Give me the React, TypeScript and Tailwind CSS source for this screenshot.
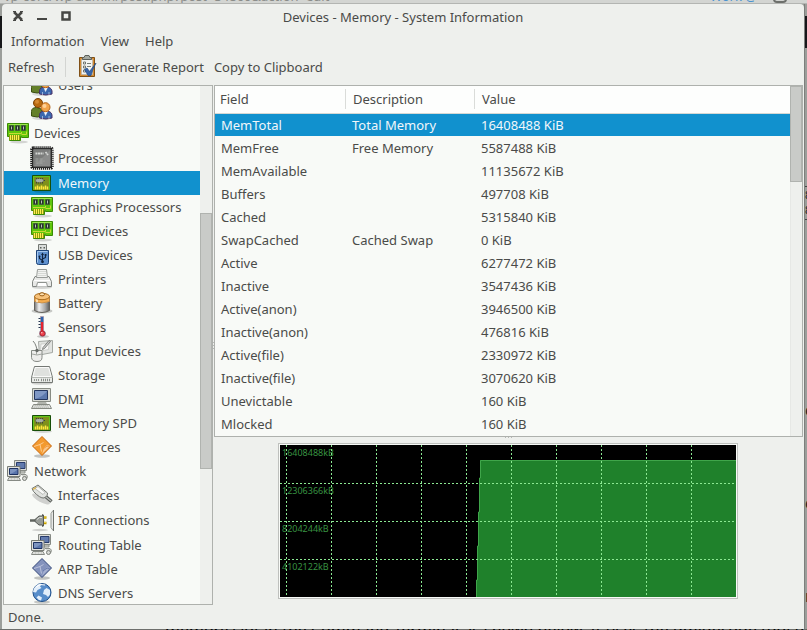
import { useState } from "react";
import type { ReactNode } from "react";
import clsx from "clsx";

function Icon({ children }: { children: ReactNode }) {
  return (
    <svg viewBox="0 0 24 24" className="size-6 shrink-0" aria-hidden="true">
      {children}
    </svg>
  );
}

function UsersIcon() {
  return (
    <Icon>
      <ellipse cx="12" cy="21" rx="10" ry="2" fill="#000" opacity=".12" />
      <path d="M1.500 19v-4.500q0-4 5-4t6 4V19q-5 2-11 0z" fill="#64802a" stroke="#3d5012" />
      <circle cx="8" cy="6" r="4.500" fill="#b8690f" stroke="#7c4308" />
      <circle cx="7" cy="4.800" r="2" fill="#d48a35" />
      <path d="M9.500 21v-3q0-4 6-4t6.500 4v3q-6 2-12.500 0z" fill="#3b68ae" stroke="#4a3268" />
      <path d="M14 14.500l1.500 4 2-4zM12.500 22v-3M19 22v-3" fill="#fff" stroke="#dbe6f5" strokeWidth=".6" />
      <circle cx="15.500" cy="10.200" r="4.500" fill="#f2a44b" stroke="#b5641a" />
      <circle cx="14.500" cy="9" r="2" fill="#ffd299" />
    </Icon>
  );
}

function CardIcon() {
  return (
    <Icon>
      <ellipse cx="13" cy="21" rx="9" ry="1.500" fill="#000" opacity=".15" />
      <path d="M1.500 2.500h21v14h-7v-1h-1v4h-11v-4h-2z" fill="#5fc70c" stroke="#3b8a04" />
      <path d="M2.500 3.500h19" stroke="#9be84f" />
      <path d="M3 14h11v5H3z" fill="#8f9c10" />
      <path d="M4.500 19v-5M6.500 19v-5M8.500 19v-5M10.500 19v-5M12.500 19v-5" stroke="#ffee4f" />
      <path d="M3 12.500h12.500v-1.500M15.500 13.500h5v-3" fill="none" stroke="#c9da35" />
      <path d="M3.500 4.500h4v5h-4zM9.500 4.500h4v5h-4zM15.500 4.500h4v5h-4z" fill="#26332a" stroke="#3f5a3a" strokeWidth=".8" />
      <path d="M5.500 5.500v3M11.500 5.500v3M17.500 5.500v3" stroke="#b9c4b8" />
    </Icon>
  );
}

function ProcessorIcon() {
  return (
    <Icon>
      <rect x="2" y="2" width="20" height="20" fill="#222" />
      <rect x="1.500" y="1.500" width="21" height="21" rx="2" fill="none" stroke="#222" strokeWidth="2.500" strokeDasharray="1.200 .8" />
      <rect x="3" y="3" width="18" height="18" rx="1" fill="#8b8c8b" stroke="#373837" />
      <path d="M3.500 20.500v-17h17z" fill="#7b7c7b" />
      <path d="M5.500 7.500h8M15.500 6l2.500 3" stroke="#d3d5d3" strokeWidth="1.800" strokeDasharray="2 .5" />
      <path d="M5.500 13h7M5.500 15h9M5.500 17h7" stroke="#aaadaa" strokeWidth=".8" strokeDasharray="3 1" />
    </Icon>
  );
}

function MemoryIcon() {
  return (
    <Icon>
      <ellipse cx="13" cy="20.500" rx="9" ry="1.500" fill="#000" opacity=".15" />
      <path d="M2.500 4.500h18v15h-18z" fill="#7f901c" stroke="#174f08" />
      <path d="M3.500 18.500v-13h16v13" fill="none" stroke="#61c51a" />
      <path d="M5.500 18.500v-3M7.500 18.500v-4M9.500 18.500v-3M11.500 18.500v-4M13.500 18.500v-3M15.500 18.500v-4M17.500 18.500v-3" stroke="#ffe73b" strokeWidth="1.500" />
      <path d="M5 9.500h10M6.500 7v5.500M8.500 7v5.500M10.500 7v5.500M12.500 7v5.500" stroke="#3e453b" strokeWidth="1.200" />
      <ellipse cx="9.500" cy="9.500" rx="4" ry="1.800" fill="#a7aea5" />
    </Icon>
  );
}

function UsbIcon() {
  return (
    <Icon>
      <path d="M8.500 1.500h8v7h-8z" fill="#d9dcda" stroke="#737773" />
      <path d="M10 4h1.500v1.500H10zM13.500 4H15v1.500h-1.500z" fill="#585d58" />
      <path d="M6.500 7.500h12v12q0 2-2 2h-8q-2 0-2-2z" fill="#5f91cf" stroke="#1e4579" />
      <path d="M7.500 19.500v-11h10" fill="none" stroke="#a4c6ed" />
      <path d="M12.500 19v-8M12.500 17.500l-3-2v-2M12.500 16l3-1.500V12" fill="none" stroke="#10233f" strokeWidth="1.100" />
      <path d="M11 12l1.500-2.500L14 12z" fill="#10233f" />
      <circle cx="12.500" cy="18.800" r="1.400" fill="#10233f" />
      <circle cx="9.500" cy="13.500" r="1" fill="#10233f" />
      <path d="M14.700 11h1.800v1.800h-1.800z" fill="#10233f" />
    </Icon>
  );
}

function PrinterIcon() {
  return (
    <Icon>
      <ellipse cx="12" cy="20.500" rx="10" ry="1.500" fill="#000" opacity=".15" />
      <path d="M5 9.500h14l2.500 5v5h-19v-5z" fill="#e8e9e7" stroke="#838783" />
      <path d="M7.500 2.500h9l1 8h-11z" fill="#f2f3f1" stroke="#989c98" />
      <path d="M8 4.500h8M8 6.500h8M7.500 8.500h9" stroke="#c8cbc7" strokeWidth=".7" />
      <path d="M4 13.500h16" stroke="#fff" />
      <path d="M6.500 19.500l1-4h9l1 4" fill="#fff" stroke="#8e928e" />
    </Icon>
  );
}

function BatteryIcon() {
  return (
    <Icon>
      <defs>
        <linearGradient id="cell">
          <stop offset="0" stopColor="#777" />
          <stop offset=".3" stopColor="#eee" />
          <stop offset=".7" stopColor="#aaa" />
          <stop offset="1" stopColor="#5c5c5c" />
        </linearGradient>
      </defs>
      <ellipse cx="12" cy="20" rx="10.500" ry="2.500" fill="#000" opacity=".2" />
      <path d="M4.500 5.500v14q7.500 4 15 0v-14z" fill="url(#cell)" stroke="#65625c" />
      <path d="M4.500 5.500v5q7.500 3 15 0v-5z" fill="#f5ad50" stroke="#b98343" strokeWidth=".7" />
      <path d="M7 7v4" stroke="#ffe0ae" strokeWidth="2" />
      <ellipse cx="12" cy="5.500" rx="7.500" ry="3.200" fill="#f7c27a" stroke="#a86a1b" />
      <ellipse cx="12" cy="3.300" rx="2.500" ry="1.600" fill="#ffe1b0" stroke="#985b12" />
    </Icon>
  );
}

function SensorIcon() {
  return (
    <Icon>
      <ellipse cx="13" cy="21.500" rx="6" ry="1.300" fill="#000" opacity=".2" />
      <path d="M10.500 1.500h3v14q2 1 2 3 0 3-3 3t-3-3q0-2 1-3z" fill="#e02c3b" stroke="#a9a0b4" />
      <path d="M11 2h2.200v5H11z" fill="#2d62ac" />
      <path d="M10.500 3.500h-2M10.500 6.500h-2M10.500 9.500h-2M10.500 12.500h-2" stroke="#24344f" />
      <path d="M11 7h2.200v11H11z" fill="#e6232f" />
      <circle cx="12.500" cy="18.500" r="2.500" fill="#ef414c" stroke="#91202b" strokeWidth=".7" />
      <circle cx="11.800" cy="17.800" r=".8" fill="#ffc3c6" />
    </Icon>
  );
}

function InputIcon() {
  return (
    <Icon>
      <path d="M8.500 2.500l14-1v12l-13 2.500z" fill="#e2e4e1" stroke="#a4a8a3" />
      <path d="M11 5l8-.5-.5 6-8 1.500z" fill="#f7f7f6" stroke="#c0c3bf" strokeWidth=".7" />
      <path d="M20.500 2.500l-6 7-2 1 .5-2 6-7z" fill="#ccc" stroke="#686c68" strokeWidth=".8" />
      <path d="M3 2q2 2 3 5t1 5" fill="none" stroke="#7c807b" />
      <path d="M1.500 11.500h10.500v7q0 4-5 4t-5.500-4z" fill="#ededeb" stroke="#868a85" />
      <path d="M2 15q5 2 10 0M6.500 11.500v4" fill="none" stroke="#a1a5a0" />
      <circle cx="7" cy="11.500" r="1.700" fill="#676b67" />
    </Icon>
  );
}

function DriveIcon() {
  return (
    <Icon>
      <ellipse cx="12" cy="20.500" rx="10.500" ry="1.300" fill="#000" opacity=".16" />
      <path d="M4.500 3.500h15l3 11v5h-21v-5z" fill="#e9ebe8" stroke="#747874" />
      <path d="M5.300 4.500h13.400l2.300 9H3z" fill="#dfe1de" stroke="#fff" strokeWidth=".8" />
      <path d="M2 14.500h20" stroke="#b5b9b4" />
      <path d="M4 17h5" stroke="#949893" strokeWidth="2" strokeDasharray="1 1" />
      <path d="M11 17h9" stroke="#888c87" strokeWidth="2.500" strokeDasharray="1 1" />
    </Icon>
  );
}

function ComputerIcon() {
  return (
    <Icon>
      <path d="M2.500 1.500h18v13h-18z" fill="#d8dad5" stroke="#888c84" />
      <path d="M4.500 3.500h13v9h-13z" fill="#5c79ae" stroke="#23365f" />
      <path d="M5 12V4h12q-3 5-12 8z" fill="#7f98c5" />
      <path d="M8 15h8l1 2H7z" fill="#b2b5ae" />
      <path d="M3.500 17.500h16l2 4h-20z" fill="#e4e5e2" stroke="#868a83" />
      <path d="M4.500 18.700h14M3.500 20.200h16" stroke="#a6a9a3" strokeWidth=".8" strokeDasharray="1.500 .5" />
    </Icon>
  );
}

function ResourceIcon() {
  return (
    <Icon>
      <ellipse cx="12" cy="21" rx="8" ry="1.700" fill="#000" opacity=".22" />
      <path d="M12 1.500L21.500 11 12 20.500 2.500 11z" fill="#f39a2f" stroke="#c9670c" />
      <path d="M20 11l-8 8 2-6 3-3z" fill="#fbc78a" />
      <path d="M4 11.500l6-2 3.500-2M10 9.500l1.500 7" fill="none" stroke="#ffd9ab" strokeWidth=".8" />
      <path d="M13 14l4-3 2.500.5" fill="none" stroke="#f0973d" />
    </Icon>
  );
}

function NetworkIcon() {
  return (
    <Icon>
      <path d="M8.500 1.500h12v10h-12z" fill="#dcddd9" stroke="#858983" />
      <path d="M10.500 3.500h8.500v6h-8.500z" fill="#617aae" stroke="#293c6b" />
      <path d="M14 12h5v2h-5zM15 15.500h5q2 1 1 4h-3" fill="#d9dbd6" stroke="#8b8f89" />
      <path d="M1.500 7.500h12.500v10H1.500z" fill="#e2e3df" stroke="#777b75" />
      <path d="M3.500 9.500H12v6H3.500z" fill="#5874ab" stroke="#1e3262" />
      <path d="M4 15v-5h7.500q-2 3-7.500 5z" fill="#7d94c0" />
      <path d="M3 18.500h10l1.500 3h-13z" fill="#eeefec" stroke="#868a84" />
      <path d="M3.500 20h10" stroke="#aaada7" strokeDasharray="1 .5" />
      <circle cx="18.500" cy="19.500" r="2" fill="#d8dad6" stroke="#797d77" />
    </Icon>
  );
}

function CableIcon() {
  return (
    <Icon>
      <ellipse cx="11" cy="16" rx="10" ry="3" transform="rotate(28 11 16)" fill="#000" opacity=".16" />
      <path d="M15 13l6.500 5.500" stroke="#575b57" strokeWidth="3.500" />
      <path d="M15.500 13.500l5.500 4.500" stroke="#b9bcb8" strokeWidth="1.300" />
      <path d="M2 5.500l6-3.500 9.500 8q1 3-3.500 5-4 .5-10.500-6.500z" fill="#e0e2df" stroke="#727671" />
      <path d="M5 5.500l3-2 7 6-2 2z" fill="#f9f9f8" stroke="#a3a7a2" strokeWidth=".7" />
      <path d="M3 6.500l3-2" stroke="#e3b84d" strokeWidth="1.500" />
    </Icon>
  );
}

function PlugIcon() {
  return (
    <Icon>
      <ellipse cx="10" cy="22" rx="8" ry="1.200" fill="#000" opacity=".16" />
      <path d="M0 12.500h6" stroke="#60645f" strokeWidth="2.500" />
      <path d="M13 9.500h3.500M13 15h3.500" stroke="#c5a000" strokeWidth="2.500" />
      <path d="M13 9h3M13 14.500h3" stroke="#f4dd55" strokeWidth=".8" />
      <path d="M5 11.500l4-3.500h3.500V6.500l1 .5v11l-1 .5V17H9l-4-3.500z" fill="#989c97" stroke="#555955" />
      <path d="M7 11.500l2.500-2H12" fill="none" stroke="#dfe1de" />
      <path d="M24 2.500h-1l-2 3v14l2 3h1" fill="#e7e8e6" stroke="#969a95" />
      <path d="M23.500 2v21" stroke="#6e726d" />
    </Icon>
  );
}

function ArpIcon() {
  return (
    <Icon>
      <ellipse cx="12" cy="21" rx="8" ry="1.700" fill="#000" opacity=".22" />
      <path d="M12 1.500L21.500 11 12 20.500 2.500 11z" fill="#8493bd" stroke="#344879" />
      <path d="M20 11l-8 8 2-6 3-3z" fill="#a4afd0" />
      <path d="M4 11.500l6-2 3.500-2M10 9.500l1.500 7" fill="none" stroke="#c6cde2" strokeWidth=".8" />
      <path d="M13 14l4-3 2.500.5" fill="none" stroke="#6477aa" />
    </Icon>
  );
}

function GlobeIcon() {
  return (
    <Icon>
      <ellipse cx="12" cy="21" rx="8" ry="1.700" fill="#000" opacity=".2" />
      <circle cx="12" cy="11.500" r="9" fill="#578dca" stroke="#1e4e89" />
      <path d="M5 6q3-4 7-3l-2 2.500 1.500 1.500-4 2-1.500 2.500-3-.5q0-3 2-5zM14 9l2.500-2 3.500 2v4.500l-2 2.500-2-2-3-1zM8.500 14.500l3.500 2-1 3q-3-.5-4.500-3z" fill="#e2eefa" />
      <path d="M6 6q4-4 9-2" fill="none" stroke="#fff" />
    </Icon>
  );
}

function ReportIcon() {
  return (
    <Icon>
      <path d="M3.500 2.500h15v19h-15z" fill="#d58b32" stroke="#805016" />
      <path d="M5.500 4.500h11v15h-11z" fill="#f3f4f2" stroke="#b5b7b3" strokeWidth=".7" />
      <path d="M6.500 4.500v-2H8l1-2h4l1 2h1.500v2z" fill="#a4a9a1" stroke="#5c605a" />
      <path d="M7.500 7h2v2h-2zM7.500 11h2v2h-2zM7.500 15h2v2h-2z" fill="#fff" stroke="#555b54" strokeWidth=".8" />
      <path d="M11 8.500h4M11 11.500h4" stroke="#777c75" />
      <path d="M8.500 14.500l2.500-1.500 2.500 3.500L20 8q-3 5-5 12.500h-3z" fill="#3966a9" stroke="#204a87" strokeWidth=".7" />
    </Icon>
  );
}

const tree = [
  { label: "Users", icon: UsersIcon },
  { label: "Groups", icon: UsersIcon },
  { label: "Devices", icon: CardIcon, root: true },
  { label: "Processor", icon: ProcessorIcon, tall: true },
  { label: "Memory", icon: MemoryIcon },
  { label: "Graphics Processors", icon: CardIcon },
  { label: "PCI Devices", icon: CardIcon },
  { label: "USB Devices", icon: UsbIcon },
  { label: "Printers", icon: PrinterIcon },
  { label: "Battery", icon: BatteryIcon },
  { label: "Sensors", icon: SensorIcon },
  { label: "Input Devices", icon: InputIcon },
  { label: "Storage", icon: DriveIcon },
  { label: "DMI", icon: ComputerIcon },
  { label: "Memory SPD", icon: MemoryIcon },
  { label: "Resources", icon: ResourceIcon },
  { label: "Network", icon: NetworkIcon, root: true },
  { label: "Interfaces", icon: CableIcon },
  { label: "IP Connections", icon: PlugIcon, tall: true },
  { label: "Routing Table", icon: NetworkIcon },
  { label: "ARP Table", icon: ArpIcon },
  { label: "DNS Servers", icon: GlobeIcon },
];

const rows = [
  ["MemTotal", "Total Memory", "16408488 KiB"],
  ["MemFree", "Free Memory", "5587488 KiB"],
  ["MemAvailable", "", "11135672 KiB"],
  ["Buffers", "", "497708 KiB"],
  ["Cached", "", "5315840 KiB"],
  ["SwapCached", "Cached Swap", "0 KiB"],
  ["Active", "", "6277472 KiB"],
  ["Inactive", "", "3547436 KiB"],
  ["Active(anon)", "", "3946500 KiB"],
  ["Inactive(anon)", "", "476816 KiB"],
  ["Active(file)", "", "2330972 KiB"],
  ["Inactive(file)", "", "3070620 KiB"],
  ["Unevictable", "", "160 KiB"],
  ["Mlocked", "", "160 KiB"],
];

function TitleBar() {
  return (
    <header className="relative flex h-[26px] shrink-0 items-center justify-center">
      <div className="absolute top-1.5 left-2.5 flex gap-3">
        <button type="button" aria-label="Close">
          <svg viewBox="0 0 12 12" className="size-3">
            <path d="M2 2l8 8M10 2l-8 8" stroke="#464744" strokeWidth="2.500" />
            <path d="M1 1.500h3M8 1.500h3M1 10.500h3M8 10.500h3" stroke="#464744" />
          </svg>
        </button>
        <button type="button" aria-label="Minimize">
          <svg viewBox="0 0 12 12" className="size-3">
            <path d="M1 8h10v2H1z" fill="#464744" />
          </svg>
        </button>
        <button type="button" aria-label="Maximize">
          <svg viewBox="0 0 12 12" className="size-3">
            <path d="M2.500 2.500h7v7h-7z" fill="none" stroke="#464744" strokeWidth="2.500" />
          </svg>
        </button>
      </div>
      <h1>Devices - Memory - System Information</h1>
    </header>
  );
}

function Sidebar() {
  const [selected, setSelected] = useState("Memory");

  return (
    <nav className="flex w-[210px] shrink-0 overflow-hidden border border-[#aeb1ad] bg-[#f8faf7]">
      <ul className="-mt-[13px] min-w-0 flex-1">
        {tree.map(({ label, icon: ItemIcon, root, tall }) => (
          <li key={label}>
            <button
              type="button"
              onClick={() => setSelected(label)}
              className={clsx(
                "flex w-full items-center gap-1 whitespace-nowrap text-left",
                root ? "pl-0.5" : "pl-[26px]",
                tall ? "h-[26px]" : "h-6",
                selected === label && "bg-[#1191ce] text-[#f2f7fa]"
              )}
            >
              <ItemIcon />
              {label}
            </button>
          </li>
        ))}
      </ul>
      <div className="w-3 bg-[#eef0ed] pt-[127px]">
        <div className="h-64 border border-[#b0b3af] bg-[#c9cbc8]" />
      </div>
    </nav>
  );
}

function MemoryTable() {
  return (
    <section className="flex min-h-0 flex-1 overflow-hidden border border-[#aeb1ad] bg-[#f8faf7]">
      <div className="min-w-0 flex-1">
        <table className="w-full table-fixed text-left">
          <colgroup>
            <col className="w-[131px]" />
            <col className="w-[129px]" />
            <col />
          </colgroup>
          <thead className="bg-[#fdfefd]">
            <tr className="h-[27px] border-b border-[#d5d8d4]">
              <th className="font-normal">
                <div className="h-5 border-r border-[#dadcd9] px-[5px]">Field</div>
              </th>
              <th className="font-normal">
                <div className="h-5 border-r border-[#dadcd9] px-[7px]">Description</div>
              </th>
              <th className="px-[7px] font-normal">Value</th>
            </tr>
          </thead>
          <tbody>
            {rows.map(([field, description, value], i) => (
              <tr
                key={field}
                className={clsx("h-[23px]", i === 0 && "bg-[#1191ce] text-[#f2f7fa]")}
              >
                <td className="px-1.5">{field}</td>
                <td className="px-1.5">{description}</td>
                <td className="px-1.5">{value}</td>
              </tr>
            ))}
          </tbody>
        </table>
      </div>
      <div className="w-3 border-l border-[#e6e8e5] bg-[#eef0ed]">
        <div className="-ml-px h-24 border border-[#b0b3af] bg-[#c9cbc8]" />
      </div>
    </section>
  );
}

function MemoryChart() {
  const columns = [6, 51, 96, 141, 186, 231, 276, 321, 366, 411];
  const lines = [38, 76, 114];
  const labels = ["16408488kB", "12306366kB", "8204244kB", "4102122kB"];

  return (
    <div className="border border-[#bec0bd] bg-[#f8faf7] p-px">
      <svg width="456" height="152" viewBox="0 0 456 152" role="img" aria-label="Memory usage">
        <rect width="456" height="152" fill="#000" />
        <path d="M196 152v-17h1v-34h1V67h1V33h1V15h256v137z" fill="#1f812b" />
        <path d="M196.500 152v-17h1v-34h1V67h1V33h1V15.500H456" fill="none" stroke="#3fa54a" />
        {labels.map((label, i) => (
          <text key={label} x="2" y={11 + i * 38} fontSize="9" fill="#389242">
            {label}
          </text>
        ))}
        <g stroke="#8be892" strokeDasharray="2 2">
          {columns.map((x) => (
            <path key={x} d={`M${x + 0.5} 0v152`} />
          ))}
          {lines.map((y) => (
            <path key={y} d={`M0 ${y + 0.5}h456`} />
          ))}
        </g>
      </svg>
    </div>
  );
}

export default function App() {
  return (
    <div
      className="flex h-screen flex-col overflow-hidden bg-[#9b9e9a] text-[13px] leading-5 text-[#4a4b49]"
      style={{ fontFamily: '"Noto Sans", sans-serif' }}
    >
      {/* Sliver of the browser behind the window */}
      <div className="flex h-1 shrink-0 items-end justify-between overflow-hidden border-b border-[#b3b5b2] bg-[#d3d5d2] pr-5 pl-1 leading-3.5 text-[#8a8c89]">
        <span>vp-core/wp-admin/post.php?post=34860&amp;action=edit</span>
        <span className="flex items-end gap-4 text-[#4a93d0]">
          Work @
          <i className="h-3 w-3.5 rounded-sm border-2 border-[#6d706c]" />
        </span>
      </div>

      <div className="flex min-h-0 flex-1">
        <div className="w-0.5 shrink-0 pt-3">
          <div className="h-8 bg-[#17181a]" />
        </div>

        <main className="flex min-w-0 flex-1 flex-col rounded-t-sm bg-[#eef0ed]">
          <TitleBar />

          <div className="flex h-[22px] shrink-0 items-center gap-4 px-[9px]">
            <button type="button">Information</button>
            <button type="button">View</button>
            <button type="button">Help</button>
          </div>

          <div className="flex h-[33px] shrink-0 items-center px-1.5 pb-1">
            <button type="button">Refresh</button>
            <div className="mx-2.5 h-5 w-px bg-[#d3d5d2]" />
            <button type="button" className="flex items-center gap-[3px]">
              <ReportIcon />
              Generate Report
            </button>
            <button type="button" className="ml-2.5">Copy to Clipboard</button>
          </div>

          <div className="flex min-h-0 flex-1 pr-px pl-px">
            <Sidebar />
            <div className="flex w-px shrink-0 flex-col items-center justify-center gap-0.5">
              <i className="size-px bg-[#b7b9b6]" />
              <i className="size-px bg-[#b7b9b6]" />
              <i className="size-px bg-[#b7b9b6]" />
            </div>
            <div className="flex min-w-0 flex-1 flex-col">
              <MemoryTable />
              <div className="flex h-1.5 shrink-0 justify-center gap-0.5">
                <i className="size-px bg-[#b7b9b6]" />
                <i className="size-px bg-[#b7b9b6]" />
                <i className="size-px bg-[#b7b9b6]" />
              </div>
              <div className="flex shrink-0 justify-center pr-0.5 pb-1.5">
                <MemoryChart />
              </div>
            </div>
          </div>

          <footer className="flex h-6 shrink-0 items-center px-1.5">Done.</footer>
        </main>

        {/* Page edge to the right, with the letters that the window leaves free */}
        <div className="flex w-[3px] shrink-0 flex-col overflow-hidden border-l border-[#7d7f7c] pt-3 text-[#222]">
          <div className="h-8 shrink-0 bg-[#17181a]" />
          <div className="mt-[138px] h-4 shrink-0 border-t border-[#444] text-[11px] leading-4">8</div>
          <div className="h-[18px] shrink-0 border-b border-[#444] text-[11px] leading-4">8</div>
          <div className="mt-[180px] text-base leading-5">c</div>
          <div className="mt-[73px] text-base leading-5">c</div>
          <div className="mt-[73px] text-base leading-5">r</div>
        </div>
      </div>

      <div className="flex h-px shrink-0 items-center overflow-hidden bg-[#6d6f6c] pl-[165px] text-base leading-5 whitespace-nowrap text-black">
        memory slot in the Command Terminal as shown below. It uses the dmidecode tool to
      </div>
    </div>
  );
}
